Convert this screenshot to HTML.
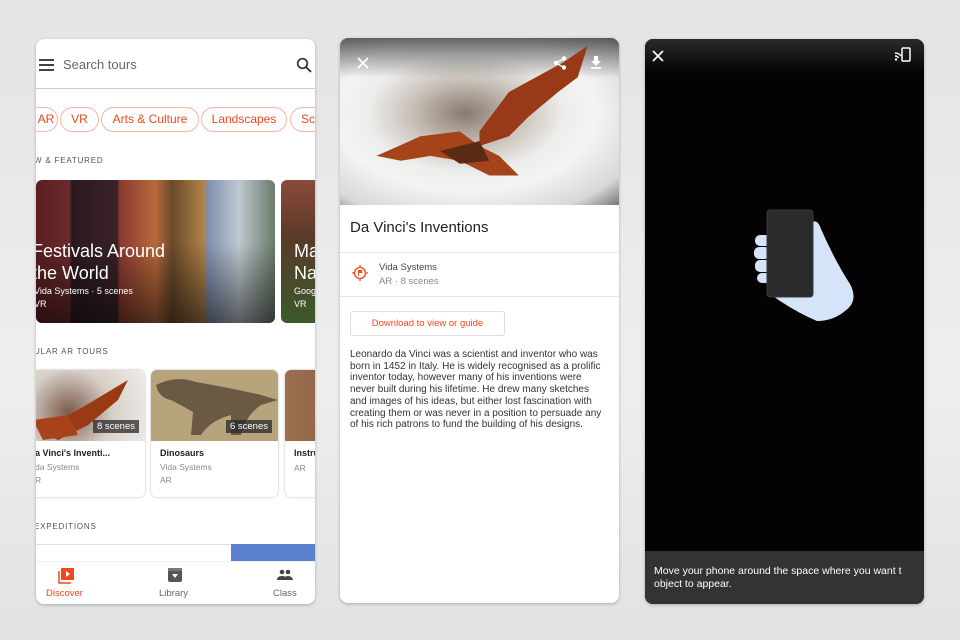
<!DOCTYPE html>
<html><head><meta charset="utf-8"><style>
*{margin:0;padding:0;box-sizing:border-box}
body{width:960px;height:640px;overflow:hidden;background:linear-gradient(#e4e4e4,#eeeeee 60%,#e2e2e2);font-family:"Liberation Sans",Arial,sans-serif;position:relative}
.p{position:absolute;border-radius:8px;overflow:hidden;box-shadow:0 1px 3px rgba(0,0,0,.25)}
.abs{position:absolute}
.chip{position:absolute;height:25px;border:1.5px solid #f6b4a4;border-radius:13px;color:#f0471d;font-size:12px;line-height:22px;text-align:center}
.sec{position:absolute;font-size:8px;letter-spacing:.8px;color:#555}
.card{position:absolute;width:127px;height:127px;border-radius:6px;background:#fff;box-shadow:0 0 2px rgba(0,0,0,.3);overflow:hidden}
.card .img{height:71px}
.card b{position:absolute;left:9px;top:78px;font-size:9px;color:#222}
.card .s{position:absolute;left:9px;font-size:8.5px;color:#888}
.badge{position:absolute;right:6px;top:50px;background:rgba(40,40,40,.75);color:#fff;font-size:9.5px;padding:1px 4px}
</style></head><body>

<!-- LEFT -->
<div class="p" style="left:36px;top:39px;width:279px;height:565px;background:#fff">
 <div class="abs" style="left:3px;top:20px;width:15px">
  <div style="height:2px;background:#444;margin-bottom:3px"></div><div style="height:2px;background:#444;margin-bottom:3px"></div><div style="height:2px;background:#444"></div></div>
 <div class="abs" style="left:27px;top:18px;font-size:13px;color:#666">Search tours</div>
 <svg class="abs" style="left:260px;top:18px" width="16" height="16" viewBox="0 0 16 16"><circle cx="6.5" cy="6.5" r="4.8" fill="none" stroke="#333" stroke-width="1.7"/><path d="M10 10l5 5" stroke="#333" stroke-width="1.9"/></svg>
 <div class="abs" style="left:0;top:49px;width:279px;height:1px;background:#ccc"></div>
 <div class="chip" style="left:-10px;width:32px;padding-left:8px;top:68px">AR</div>
 <div class="chip" style="left:24px;width:39px;top:68px">VR</div>
 <div class="chip" style="left:65px;width:98px;top:68px">Arts &amp; Culture</div>
 <div class="chip" style="left:165px;width:86px;top:68px">Landscapes</div>
 <div class="chip" style="left:254px;width:40px;top:68px;text-align:left;padding-left:10px">Sc</div>
 <div class="sec" style="left:-2px;top:117px">W &amp; FEATURED</div>
 <div class="abs" style="left:0;top:141px;width:239px;height:143px;border-radius:6px;overflow:hidden;background:linear-gradient(90deg,#5a1e24 0,#6a2a2a 14%,#2a1a20 15%,#3a2226 34%,#8a3a30 35%,#b8683a 50%,#6a4a2a 57%,#b08048 70%,#8090b0 72%,#c0c8d0 85%,#6a7a6a 100%)">
  <div class="abs" style="left:0;right:0;bottom:0;height:80px;background:linear-gradient(transparent,rgba(0,0,0,.55))"></div>
  <div class="abs" style="left:-4px;top:60px;color:#fff;font-size:18px;line-height:22px">Festivals Around<br>the World</div>
  <div class="abs" style="left:-2px;top:106px;color:#fff;font-size:9px">Vida Systems · 5 scenes</div>
  <div class="abs" style="left:-2px;top:119px;color:#fff;font-size:9px">VR</div>
 </div>
 <div class="abs" style="left:245px;top:141px;width:40px;height:143px;border-radius:6px;overflow:hidden;background:linear-gradient(#8a4a3a,#5a3a2a 40%,#3a5a2a)">
  <div class="abs" style="left:13px;top:60px;color:#fff;font-size:18px;line-height:22px">Ma<br>Na</div>
  <div class="abs" style="left:13px;top:106px;color:#fff;font-size:9px">Goog</div>
  <div class="abs" style="left:13px;top:119px;color:#fff;font-size:9px">VR</div>
 </div>
 <div class="sec" style="left:-2px;top:308px">ULAR AR TOURS</div>
 <div class="card" style="left:-18px;top:331px">
  <div class="img" style="background:radial-gradient(circle at 40% 60%,#7a5a4a,#d8d0c8 50%,#eee)"><svg width="127" height="71"><path d="M20 60 L60 40 L110 10 L100 30 L70 55 L40 70Z" fill="#9a3a14"/><path d="M15 50 L50 45 L60 65 L25 70Z" fill="#a8421a"/></svg></div>
  <div class="badge">8 scenes</div>
  <b style="left:17px">a Vinci's Inventi...</b><div class="s" style="left:17px;top:92px">da Systems</div><div class="s" style="left:17px;top:105px">R</div></div>
 <div class="card" style="left:115px;top:331px">
  <div class="img" style="background:#b8a47c"><svg width="127" height="71"><path d="M5 15 Q25 5 45 12 Q80 18 110 25 L127 30 L110 35 Q95 45 90 65 L80 65 L80 45 Q60 50 50 65 L40 65 L42 42 Q30 35 20 30 Q8 28 5 15Z" fill="#6a5a44"/></svg></div>
  <div class="badge">6 scenes</div>
  <b>Dinosaurs</b><div class="s" style="top:92px">Vida Systems</div><div class="s" style="top:105px">AR</div></div>
 <div class="card" style="left:249px;top:331px">
  <div class="img" style="background:linear-gradient(90deg,#9a7050,#7a5030)"></div>
  <b>Instru</b><div class="s" style="top:93px">AR</div></div>
 <div class="sec" style="left:-2px;top:483px">EXPEDITIONS</div>
 <div class="abs" style="left:0;top:505px;width:279px;height:1px;background:#ddd"></div>
 <div class="abs" style="left:195px;top:505px;width:84px;height:18px;background:#5a80d0"></div>
 <div class="abs" style="left:0;top:522px;width:279px;height:43px;background:#fff;border-top:1px solid #eee"></div>
 <svg class="abs" style="left:22px;top:529px" width="16" height="16" viewBox="0 0 16 16"><rect x="3" y="0" width="13" height="12" rx="1" fill="#f0471d"/><path d="M1 3v12h12" fill="none" stroke="#f0471d" stroke-width="1.5"/><path d="M8 3l4 3-4 3z" fill="#fff"/></svg>
 <div class="abs" style="left:10px;top:549px;font-size:9.5px;color:#f0471d">Discover</div>
 <svg class="abs" style="left:132px;top:529px" width="14" height="14" viewBox="0 0 14 14"><rect width="14" height="14" rx="2" fill="#555"/><rect y="0" width="14" height="3" fill="#777"/><path d="M4 6h6l-3 4z" fill="#fff"/></svg>
 <div class="abs" style="left:123px;top:549px;font-size:9.5px;color:#666">Library</div>
 <svg class="abs" style="left:241px;top:530px" width="16" height="12" viewBox="0 0 16 12"><circle cx="5" cy="3" r="2.3" fill="#444"/><circle cx="11" cy="3" r="2.3" fill="#444"/><path d="M0 11q0-4 5-4t5 4zM7 11q0-4 4-4t5 4z" fill="#444"/></svg>
 <div class="abs" style="left:237px;top:549px;font-size:9.5px;color:#666">Class</div>
</div>

<!-- MIDDLE -->
<div class="p" style="left:340px;top:38px;width:279px;height:565px;background:#fff">
 <div class="abs" style="left:0;top:0;width:279px;height:167px;background:radial-gradient(ellipse at 45% 45%,#8a7a70 0,#c8c0b8 25%,#ededeb 45%,#f4f4f4 60%,#d8d8d8 85%,#777 100%)">
  <div class="abs" style="left:0;top:0;width:279px;height:40px;background:linear-gradient(rgba(40,40,40,.7),transparent)"></div>
  <svg class="abs" style="left:0;top:0" width="279" height="167" viewBox="0 0 280 170"><path d="M140 95 L170 55 L225 25 L250 8 L240 40 L220 55 L190 80 L170 100 L140 110Z" fill="#983a18"/><path d="M35 120 L80 100 L120 95 L140 110 L160 120 L180 140 L150 140 L120 125 L90 120 L60 125Z" fill="#a5441a"/><path d="M100 115 L140 105 L150 125 L120 128Z" fill="#5a2a14"/></svg>
  <svg class="abs" style="left:17px;top:19px" width="12" height="12"><path d="M1 1l10 10M11 1L1 11" stroke="#fff" stroke-width="1.6"/></svg>
  <svg class="abs" style="left:213px;top:18px" width="14" height="14"><circle cx="11" cy="2.5" r="2.2" fill="#fff"/><circle cx="3" cy="7" r="2.2" fill="#fff"/><circle cx="11" cy="11.5" r="2.2" fill="#fff"/><path d="M11 2.5L3 7l8 4.5" stroke="#fff" stroke-width="1.3" fill="none"/></svg>
  <svg class="abs" style="left:250px;top:18px" width="12" height="14"><path d="M4 0h4v5h3l-5 5-5-5h3z" fill="#fff"/><rect x="1" y="11" width="10" height="1.8" fill="#fff"/></svg>
 </div>
 <div class="abs" style="left:10px;top:181px;font-size:15px;color:#222">Da Vinci's Inventions</div>
 <div class="abs" style="left:0;top:214px;width:279px;height:1px;background:#e6e6e6"></div>
 <svg class="abs" style="left:12px;top:227px" width="16" height="16" viewBox="0 0 16 16"><circle cx="8" cy="8" r="5.5" fill="none" stroke="#f0471d" stroke-width="1.3"/><path d="M8 0v2.5M8 13.5V16M0 8h2.5M13.5 8H16" stroke="#f0471d" stroke-width="1.3"/><path d="M6 5h5l-1.5 1.5L11 8H7v3H6z" fill="#f0471d"/></svg>
 <div class="abs" style="left:39px;top:224px;font-size:9.5px;color:#444">Vida Systems</div>
 <div class="abs" style="left:39px;top:238px;font-size:9.5px;color:#888">AR · 8 scenes</div>
 <div class="abs" style="left:0;top:258px;width:279px;height:1px;background:#e6e6e6"></div>
 <div class="abs" style="left:10px;top:273px;width:155px;height:25px;border:1px solid #ddd;border-radius:3px;color:#f0471d;font-size:9.5px;line-height:23px;text-align:center">Download to view or guide</div>
 <div class="abs" style="left:10px;top:311px;width:258px;font-size:10px;line-height:11.7px;color:#333">Leonardo da Vinci was a scientist and inventor who was born in 1452 in Italy. He is widely recognised as a prolific inventor today, however many of his inventions were never built during his lifetime. He drew many sketches and images of his ideas, but either lost fascination with creating them or was never in a position to persuade any of his rich patrons to fund the building of his designs.</div>
</div>

<!-- RIGHT -->
<div class="p" style="left:645px;top:39px;width:279px;height:565px;background:#040203">
 <div class="abs" style="left:0;top:0;width:279px;height:35px;background:linear-gradient(#2a2a2a,transparent)"></div>
 <svg class="abs" style="left:7px;top:11px" width="12" height="12"><path d="M1 1l10 10M11 1L1 11" stroke="#fff" stroke-width="1.6"/></svg>
 <svg class="abs" style="left:249px;top:8px" width="18" height="16" viewBox="0 0 18 16"><rect x="8" y="1" width="8" height="13" rx="1" fill="none" stroke="#fff" stroke-width="1.5"/><path d="M1 6q4 0 6 3M1 9q2.5 0 3.5 2" stroke="#fff" stroke-width="1.4" fill="none"/><circle cx="2" cy="12.5" r="1.2" fill="#fff"/></svg>
 <svg class="abs" style="left:0;top:0" width="279" height="400" viewBox="0 0 279 400">
  <path d="M165 185 Q172 178 176 190 Q190 222 205 245 Q214 262 200 272 Q188 282 172 282 Q155 275 135 262 L125 255 L125 200 Z" fill="#d6e4fa"/>
  <rect x="110" y="196" width="16" height="11" rx="5" fill="#d6e4fa"/>
  <rect x="109" y="208" width="16" height="12" rx="5" fill="#d6e4fa"/>
  <rect x="110" y="221" width="22" height="12" rx="5" fill="#d6e4fa"/>
  <rect x="112" y="234" width="22" height="10" rx="5" fill="#d6e4fa"/>
  <rect x="122" y="171" width="46" height="87" rx="3" fill="#2b2b2b" stroke="#3a3a3a"/>
 </svg>
 <div class="abs" style="left:0;top:512px;width:279px;height:53px;background:#333"></div>
 <div class="abs" style="left:9px;top:526px;width:290px;font-size:10.5px;line-height:13px;color:#fff;white-space:nowrap">Move your phone around the space where you want t<br>object to appear.</div>
</div>
</body></html>
